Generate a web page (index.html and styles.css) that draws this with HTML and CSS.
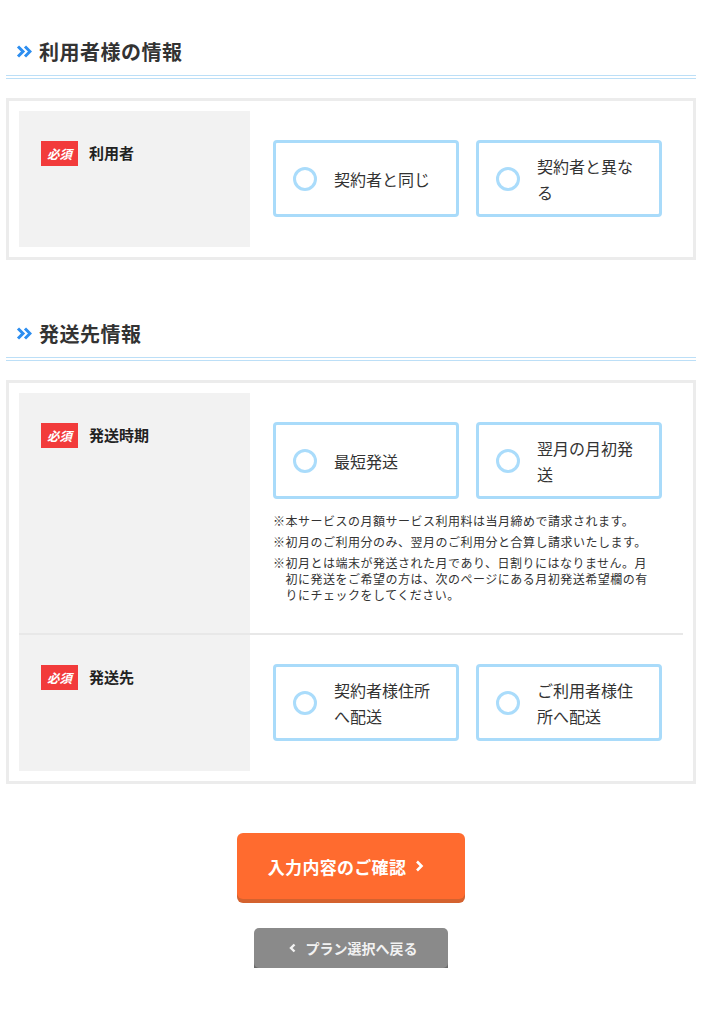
FILE: index.html
```html
<!DOCTYPE html>
<html lang="ja">
<head>
<meta charset="utf-8">
<title>利用者様の情報</title>
<link rel="stylesheet" href="styles.css">
</head>
<body>
<div class="page">
  <h2 class="sec-title sec-first">
    <svg class="chev" width="16" height="13" viewBox="0 0 16 13"><polyline points="2,1.5 7,6.5 2,11.5" fill="none" stroke="#2d8ef0" stroke-width="3"/><polyline points="9,1.5 14,6.5 9,11.5" fill="none" stroke="#2d8ef0" stroke-width="3"/></svg>
    <span>利用者様の情報</span>
  </h2>
  <div class="box">
    <div class="row">
      <div class="label-cell"><span class="badge">必須</span><span class="label">利用者</span></div>
      <div class="field-cell">
        <div class="options">
          <label class="opt"><span class="circle"></span><span class="opt-text">契約者と同じ</span></label>
          <label class="opt"><span class="circle"></span><span class="opt-text">契約者と異なる</span></label>
        </div>
      </div>
    </div>
  </div>

  <h2 class="sec-title sec-second">
    <svg class="chev" width="16" height="13" viewBox="0 0 16 13"><polyline points="2,1.5 7,6.5 2,11.5" fill="none" stroke="#2d8ef0" stroke-width="3"/><polyline points="9,1.5 14,6.5 9,11.5" fill="none" stroke="#2d8ef0" stroke-width="3"/></svg>
    <span>発送先情報</span>
  </h2>
  <div class="box">
    <div class="row">
      <div class="label-cell"><span class="badge">必須</span><span class="label">発送時期</span></div>
      <div class="field-cell">
        <div class="options">
          <label class="opt"><span class="circle"></span><span class="opt-text">最短発送</span></label>
          <label class="opt"><span class="circle"></span><span class="opt-text">翌月の月初発送</span></label>
        </div>
        <ul class="notes">
          <li>※本サービスの月額サービス利用料は当月締めで請求されます。</li>
          <li>※初月のご利用分のみ、翌月のご利用分と合算し請求いたします。</li>
          <li>※初月とは端末が発送された月であり、日割りにはなりません。月初に発送をご希望の方は、次のページにある月初発送希望欄の有りにチェックをしてください。</li>
        </ul>
      </div>
    </div>
    <div class="row row-divided">
      <div class="label-cell"><span class="badge">必須</span><span class="label">発送先</span></div>
      <div class="field-cell">
        <div class="options">
          <label class="opt"><span class="circle"></span><span class="opt-text">契約者様住所へ配送</span></label>
          <label class="opt"><span class="circle"></span><span class="opt-text">ご利用者様住所へ配送</span></label>
        </div>
      </div>
    </div>
  </div>

  <div class="actions">
    <a class="btn-confirm" href="#">入力内容のご確認<svg class="btn-chev" width="9" height="12" viewBox="0 0 9 12"><polyline points="2,1.5 6.5,6 2,10.5" fill="none" stroke="#fff" stroke-width="2.6"/></svg></a>
    <a class="btn-back" href="#"><svg class="btn-chev-l" width="8" height="10" viewBox="0 0 8 10"><polyline points="5.5,1.5 2,5 5.5,8.5" fill="none" stroke="#f2f2f2" stroke-width="2.4"/></svg>プラン選択へ戻る</a>
  </div>
</div>
</body>
</html>
```

FILE: styles.css
```css
* { box-sizing: border-box; }
html, body { margin: 0; padding: 0; background: #fff; }
body {
  font-family: "Noto Sans CJK JP", "Noto Sans", sans-serif;
  color: #333;
}
.page { padding: 0 6px; }

.sec-title {
  margin: 0;
  display: flex;
  align-items: center;
  height: 43px;
  padding: 0 0 9px 10px;
  font-size: 20px;
  font-weight: bold;
  color: #333;
  letter-spacing: 0.5px;
  border-bottom: 4px double #bcdff7;
}
.sec-first { margin-top: 36px; }
.sec-second { margin-top: 58px; }
.sec-title .chev { margin-right: 7px; flex: none; }

.box {
  margin-top: 19px;
  border: 3px solid #ececec;
  padding: 10px;
}
.row { display: flex; }
.row-divided { border-top: 2px solid #e8e8e8; }
.label-cell {
  width: 231px;
  flex: none;
  background: #f2f2f2;
  padding: 30px 0 0 22px;
  display: flex;
  align-items: flex-start;
}
.badge {
  display: inline-flex;
  align-items: center;
  justify-content: center;
  width: 37px;
  height: 25px;
  background: #f23b3b;
  color: #fff;
  font-size: 12.5px;
  font-weight: bold;
  font-style: italic;
}
.label {
  margin-left: 11px;
  font-size: 15px;
  font-weight: bold;
  color: #222;
  line-height: 25px;
  margin-top: -1px;
}
.field-cell {
  flex: 1;
  padding: 29px 22px 30px 23px;
}
.options { display: flex; gap: 17px; }
.opt {
  width: 186px;
  height: 77px;
  border: 3px solid #a9dbfa;
  border-radius: 4px;
  display: flex;
  align-items: center;
  padding: 0 16px 0 17px;
  cursor: pointer;
}
.circle {
  flex: none;
  width: 24px;
  height: 24px;
  border: 3px solid #aadcfb;
  border-radius: 50%;
  margin-right: 17px;
}
.opt-text {
  font-size: 16px;
  line-height: 26px;
  color: #333;
  flex: 1;
}

.notes {
  list-style: none;
  margin: 14px 0 0 0;
  padding: 0;
  width: 382px;
}
.notes li {
  font-size: 12px;
  line-height: 16px;
  letter-spacing: 0.5px;
  color: #333;
  padding-left: 12.5px;
  text-indent: -12.5px;
  margin-bottom: 5px;
}
.notes li:last-child { margin-bottom: 0; }

.actions {
  display: flex;
  flex-direction: column;
  align-items: center;
  margin-top: 49px;
}
.btn-confirm {
  display: flex;
  align-items: center;
  justify-content: center;
  width: 228px;
  height: 66px;
  background: #ff6b2f;
  border-radius: 6px;
  box-shadow: 0 4px 0 #d4622f;
  color: #fff;
  font-size: 17px;
  font-weight: bold;
  letter-spacing: 0.3px;
  text-decoration: none;
  padding-right: 10px;
}
.btn-chev { margin-left: 9px; }
.btn-back {
  margin-top: 29px;
  display: flex;
  align-items: center;
  justify-content: center;
  width: 194px;
  height: 40px;
  background: #8a8a8a;
  border-radius: 5px;
  box-shadow: 0 4px 0 #6a6a6a;
  color: #f2f2f2;
  font-size: 14px;
  font-weight: bold;
  text-decoration: none;
  padding-left: 4px;
}
.btn-chev-l { margin-right: 9px; }
```
